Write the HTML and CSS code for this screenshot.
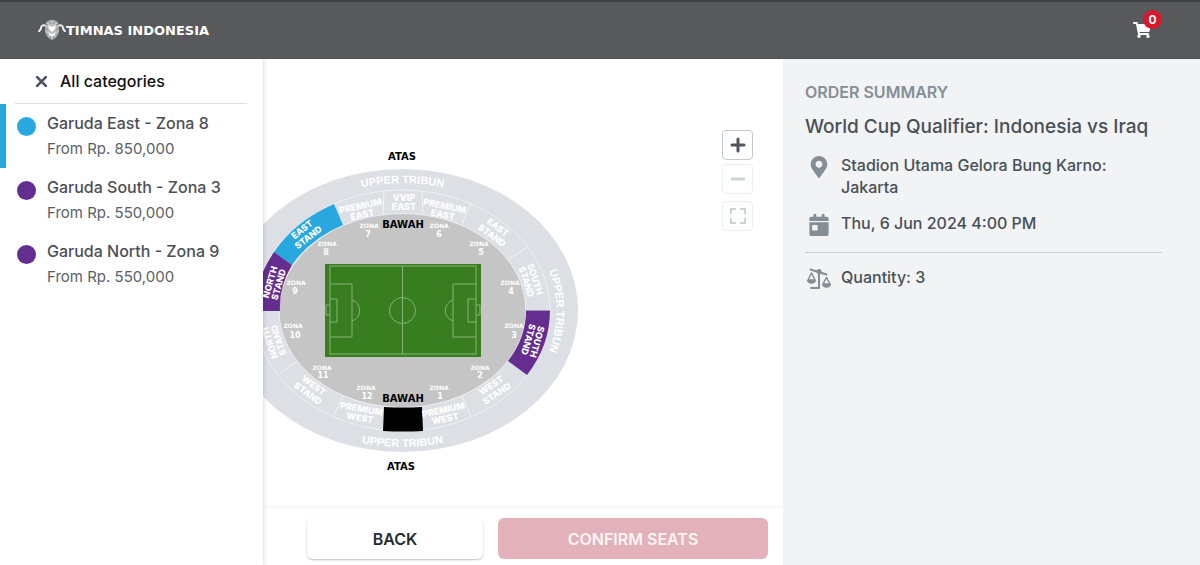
FILE: index.html
```html
<!DOCTYPE html>
<html lang="en">
<head>
<meta charset="utf-8">
<meta name="viewport" content="width=device-width, initial-scale=1">
<title>Timnas Indonesia – Select seats</title>
<link rel="stylesheet" href="styles.css">
</head>
<body>
<header class="topbar">
  <a class="brand" href="#">
    <svg class="brand-mark" viewBox="0 0 28 22" aria-hidden="true">
      <path d="M8 7C5 5 3 7 3 9c0 2-2 2-2 4M20 7c3-2 5 0 5 2 0 2 2 2 2 4" fill="none" stroke="#eee" stroke-width="2"/>
      <path d="M8 4c2-4 10-4 12 0l1 6c0 6-3 9-7 11-4-2-7-5-7-11z" fill="#bdbdbd"/>
      <path d="M8 5l5 4M20 5l-5 4M7 9l3 2M21 9l-3 2M9 16l3-2M19 16l-3-2M11 2l2 3M17 2l-2 3M12 19l2-3 2 3" stroke="#858788" fill="none"/>
      <path d="M10 6l4 2 4-2-1 4-3 3-3-3z" fill="#fff"/>
      <path d="M10 13l4 2 4-2-1 3-3 2-3-2z" fill="#f1f1f1"/>
    </svg>
    <span>TIMNAS INDONESIA</span>
  </a>
  <button class="cart" type="button" aria-label="Cart">
    <svg class="cart-icon" viewBox="0 0 576 512" aria-hidden="true"><path fill="#fff" d="M528.12 301.319l47.273-208C578.806 78.301 567.391 64 551.99 64H159.208l-9.166-44.81C147.758 8.021 137.93 0 126.529 0H24C10.745 0 0 10.745 0 24v16c0 13.255 10.745 24 24 24h69.883l70.248 343.435C147.325 417.1 136 435.222 136 456c0 30.928 25.072 56 56 56s56-25.072 56-56c0-15.674-6.447-29.835-16.824-40h209.647C430.447 426.165 424 440.326 424 456c0 30.928 25.072 56 56 56s56-25.072 56-56c0-22.172-12.888-41.332-31.579-50.405l5.517-24.276c3.413-15.018-8.002-29.319-23.403-29.319H218.117l-6.545-32h293.145c11.206 0 20.92-7.754 23.403-18.681z"/></svg>
    <span class="cart-count">0</span>
  </button>
</header>
<div class="layout">
  <nav class="categories" aria-label="Ticket categories">
    <button class="categories-head" type="button">
      <svg class="close-icon" viewBox="0 0 12 12" aria-hidden="true"><path d="M2 2l8 8M10 2l-8 8" stroke="#4b5360" stroke-width="2.500" stroke-linecap="round"/></svg>
      <span>All categories</span>
    </button>
    <ul class="category-list">
      <li><a class="category active" href="#"><span class="dot east"></span><span class="category-text"><strong>Garuda East - Zona 8</strong><span>From Rp. 850,000</span></span></a></li>
      <li><a class="category" href="#"><span class="dot"></span><span class="category-text"><strong>Garuda South - Zona 3</strong><span>From Rp. 550,000</span></span></a></li>
      <li><a class="category" href="#"><span class="dot"></span><span class="category-text"><strong>Garuda North - Zona 9</strong><span>From Rp. 550,000</span></span></a></li>
    </ul>
  </nav>
  <main class="stage">
    <div class="map">
      <svg class="stadium" viewBox="263 59 520 448" role="img" aria-label="Stadium map">
        <defs>
          <path id="arcTop" d="M242 310.500A160 127 0 0 1 563 310.500"/>
          <path id="arcBottom" d="M235 310.500A167 136 0 0 0 570 310.500"/>
          <path id="arcRight" d="M402.500 181A154 130 0 0 1 402.500 441"/>
        </defs>
        <ellipse cx="402.500" cy="310.500" rx="175.500" ry="141.500" fill="#dce0e5"/>
        <ellipse cx="402.500" cy="310.500" rx="147.500" ry="120.500" fill="none" stroke="#eef0f2"/>
        <ellipse cx="402.500" cy="310.500" rx="123.500" ry="97" fill="#c5c5c5" stroke="#eef0f2"/>
        <path d="M384 191l-1 23M422 191l1 23M471 203l-9 21M527 247l-18 12M280 373l16-11M333 417l10-21M471 417l-9-21M526 310.500h24" stroke="#f3f4f6"/>
        <path fill="#29a8e0" d="M274 252A147.500 120.500 0 0 1 334 204L343 225A123.500 97 0 0 0 292 265Z"/>
        <path fill="#662d91" d="M274 252A147.500 120.500 0 0 0 255 311H280A123.500 97 0 0 1 292 265Z"/>
        <path fill="#662d91" d="M526 310.500H550A147.500 120.500 0 0 1 527 375L508 361A123.500 97 0 0 0 526 310.500Z"/>
        <path d="M384 407q19 1 38 0l1 24q-20 1-40 0Z"/>
        <g fill="none" stroke="#87b276">
          <rect x="325" y="264" width="156" height="93" fill="#387d20" stroke="none"/>
          <rect x="330" y="266" width="146" height="88"/>
          <path d="M402.500 266v88M330 284h22v53h-22M330 299h7v23h-7M330 305h-4v10h4M476 284h-23v53h23M476 299h-8v23h8M476 305h4v10h-4M352 300a11 11 0 0 1 0 21M453 300a11 11 0 0 0 0 21"/>
          <circle cx="402.500" cy="310.500" r="13"/>
        </g>
        <g class="tribun">
          <text><textPath href="#arcTop" startOffset="50%">UPPER TRIBUN</textPath></text>
          <text><textPath href="#arcBottom" startOffset="50%">UPPER TRIBUN</textPath></text>
          <text><textPath href="#arcRight" startOffset="50%">UPPER TRIBUN</textPath></text>
        </g>
        <g class="gate">
          <text x="402" y="160">ATAS</text><text x="403" y="228">BAWAH</text>
          <text x="403" y="402">BAWAH</text><text x="401" y="470">ATAS</text>
        </g>
        <g class="stand">
          <text x="404" y="201">VVIP<tspan x="404" dy="9">EAST</tspan></text>
          <text transform="translate(361 209) rotate(-12)">PREMIUM<tspan x="0" dy="9">EAST</tspan></text>
          <text transform="translate(444 209) rotate(12)">PREMIUM<tspan x="0" dy="9">EAST</tspan></text>
          <text transform="translate(361 412) rotate(10)">PREMIUM<tspan x="0" dy="9">WEST</tspan></text>
          <text transform="translate(444 413) rotate(-12)">PREMIUM<tspan x="0" dy="9">WEST</tspan></text>
          <text transform="translate(304 232) rotate(-38)">EAST<tspan x="0" dy="10">STAND</tspan></text>
          <text transform="translate(496 230) rotate(36)">EAST<tspan x="0" dy="10">STAND</tspan></text>
          <text transform="translate(312 388) rotate(36)">WEST<tspan x="0" dy="10">STAND</tspan></text>
          <text transform="translate(493 388) rotate(-34)">WEST<tspan x="0" dy="10">STAND</tspan></text>
          <text transform="translate(273 283) rotate(-74)">NORTH<tspan x="0" dy="9">STAND</tspan></text>
          <text transform="translate(273 342) rotate(-108)">NORTH<tspan x="0" dy="9">STAND</tspan></text>
          <text transform="translate(532 280) rotate(72)">SOUTH<tspan x="0" dy="9">STAND</tspan></text>
          <text transform="translate(534 341) rotate(106)">SOUTH<tspan x="0" dy="9">STAND</tspan></text>
        </g>
        <g class="zone">
          <text x="369" y="228">ZONA<tspan class="number" x="368" dy="9">7</tspan></text>
          <text x="439" y="228">ZONA<tspan class="number" x="439" dy="9">6</tspan></text>
          <text x="327" y="246">ZONA<tspan class="number" x="326" dy="9">8</tspan></text>
          <text x="479" y="246">ZONA<tspan class="number" x="481" dy="9">5</tspan></text>
          <text x="296" y="285">ZONA<tspan class="number" x="295" dy="9">9</tspan></text>
          <text x="510" y="285">ZONA<tspan class="number" x="511" dy="9">4</tspan></text>
          <text x="293" y="328">ZONA<tspan class="number" x="295" dy="10">10</tspan></text>
          <text x="514" y="328">ZONA<tspan class="number" x="514" dy="10">3</tspan></text>
          <text x="322" y="370">ZONA<tspan class="number" x="323" dy="8">11</tspan></text>
          <text x="480" y="370">ZONA<tspan class="number" x="480" dy="8">2</tspan></text>
          <text x="366" y="390">ZONA<tspan class="number" x="367" dy="9">12</tspan></text>
          <text x="439" y="390">ZONA<tspan class="number" x="440" dy="9">1</tspan></text>
        </g>
      </svg>
      <div class="zoom-controls">
        <button type="button" class="zoom-button" aria-label="Zoom in"><svg viewBox="0 0 16 16"><path d="M8 2v12M2 8h12" stroke="#50565b" stroke-width="3" stroke-linecap="round"/></svg></button>
        <button type="button" class="zoom-button faded" aria-label="Zoom out"><svg viewBox="0 0 16 16"><path d="M1 8h14" stroke="#d0d3d6" stroke-width="3"/></svg></button>
        <button type="button" class="zoom-button faded fit" aria-label="Fit to screen"><svg viewBox="0 0 16 16"><path d="M1 6V1h5M10 1h5v5M15 10v5h-5M6 15H1v-5" fill="none" stroke="#cfd2d5" stroke-width="2"/></svg></button>
      </div>
    </div>
    <footer class="actions">
      <button class="button back" type="button">BACK</button>
      <button class="button confirm" type="button">CONFIRM SEATS</button>
    </footer>
  </main>
  <aside class="summary">
    <h2>ORDER SUMMARY</h2>
    <h1>World Cup Qualifier: Indonesia vs Iraq</h1>
    <div class="detail">
      <svg class="detail-icon" viewBox="0 0 384 512" aria-hidden="true"><path d="M172.268 501.670C26.970 291.031 0 269.413 0 192 0 85.961 85.961 0 192 0s192 85.961 192 192c0 77.413-26.970 99.031-172.268 309.670-9.535 13.774-29.930 13.773-39.464 0zM192 272c44.183 0 80-35.817 80-80s-35.817-80-80-80-80 35.817-80 80 35.817 80 80 80z"/></svg>
      <p>Stadion Utama Gelora Bung Karno: Jakarta</p>
    </div>
    <div class="detail">
      <svg class="detail-icon" viewBox="0 0 448 512" aria-hidden="true"><path d="M0 464c0 26.500 21.500 48 48 48h352c26.500 0 48-21.500 48-48V192H0v272zm64-192c0-8.800 7.200-16 16-16h96c8.800 0 16 7.200 16 16v96c0 8.800-7.200 16-16 16H80c-8.800 0-16-7.200-16-16v-96zM400 64h-48V16c0-8.800-7.200-16-16-16h-32c-8.800 0-16 7.200-16 16v48H160V16c0-8.800-7.200-16-16-16h-32c-8.800 0-16 7.200-16 16v48H48C21.500 64 0 85.500 0 112v48h448v-48c0-26.500-21.500-48-48-48z"/></svg>
      <p>Thu, 6 Jun 2024 4:00 PM</p>
    </div>
    <div class="detail quantity">
      <svg class="detail-icon" viewBox="0 0 26 22" aria-hidden="true">
        <path d="M4.500 1.500l16 5M13 4v16H5" fill="none" stroke="#858d95" stroke-width="2" stroke-linecap="round" stroke-linejoin="round"/>
        <circle cx="13" cy="3.500" r="2.500"/>
        <path d="M5.500 5L2 12h7zM20.500 9.500L17 16h7z" fill="none" stroke="#858d95" stroke-width="1.500" stroke-linejoin="round"/>
        <path d="M1 12h9c0 5-9 5-9 0zM16 16h9c0 5-9 5-9 0z"/>
      </svg>
      <p>Quantity: 3</p>
    </div>
  </aside>
</div>
</body>
</html>
```
FILE: styles.css
```css
* { box-sizing: border-box; }

body {
  margin: 0;
  min-height: 100vh;
  display: flex;
  flex-direction: column;
  background: #fff;
  color: #495057;
  font-family: Inter, "Liberation Sans", sans-serif;
  font-size: 16px;
}

button { font: inherit; cursor: pointer; }

.topbar {
  display: flex;
  align-items: center;
  justify-content: space-between;
  height: 59px;
  padding: 0 38px;
  border-top: 2px solid #414141;
  border-bottom: 1px solid #4e4f50;
  background: #58595a;
}

.brand {
  display: flex;
  align-items: center;
  color: #fff;
  font: bold 13px "DejaVu Sans", sans-serif;
  text-decoration: none;
}

.brand-mark { width: 28px; height: 22px; }

.cart {
  position: relative;
  padding: 0;
  width: 29px;
  height: 16px;
  border: 0;
  background: none;
}

.cart-icon { display: block; width: 18px; height: 16px; }

.cart-count {
  position: absolute;
  top: -12px;
  right: 0;
  width: 19px;
  border-radius: 50%;
  background: #d9182d;
  color: #fff;
  font-size: 12px;
  font-weight: 700;
  line-height: 19px;
  text-align: center;
}

.layout {
  flex: 1;
  display: grid;
  grid-template-columns: 263px minmax(0, 1fr) 417px;
}

.categories {
  z-index: 1;
  background: #fff;
  box-shadow: 0 0 5px rgba(0, 0, 0, 0.2);
  clip-path: inset(0 -8px 0 0);
}

.categories-head {
  display: flex;
  align-items: center;
  gap: 12px;
  width: calc(100% - 31px);
  height: 45px;
  margin: 0 16px 0 15px;
  padding: 0 20px;
  border: 0;
  border-bottom: 1px solid #dedfe1;
  background: none;
  color: #111;
  font-weight: 500;
}

.close-icon { width: 13px; height: 13px; }

.category-list { margin: 0; padding: 0; list-style: none; }

.category {
  display: flex;
  gap: 11px;
  min-height: 64px;
  padding: 9px 12px 9px 11px;
  border-left: 6px solid transparent;
  color: #5b6067;
  font-size: 15px;
  text-decoration: none;
}

.category.active { border-color: #29a8e0; }

.dot {
  flex: none;
  width: 19px;
  height: 19px;
  margin-top: 4px;
  border-radius: 50%;
  background: #662d91;
}

.dot.east { background: #29a8e0; }

.category-text {
  display: flex;
  flex-direction: column;
  gap: 6px;
  line-height: 20px;
}

.category-text strong { color: #4b5056; font-size: 16px; font-weight: 500; }

.stage { display: flex; flex-direction: column; }

.map { position: relative; flex: 1; }

.stadium { display: block; width: 100%; height: 100%; }

.stadium text { text-anchor: middle; }

.tribun text { fill: #fff; font: bold 11px "Liberation Sans", sans-serif; }

.gate text { fill: #000; font: bold 10px "DejaVu Sans", sans-serif; }

.stand text { fill: #fff; font-size: 9px; font-weight: 800; }

.zone text { fill: #fff; font: bold 6px "DejaVu Sans", sans-serif; }

.zone .number { font-size: 8px; }

.zoom-controls {
  position: absolute;
  top: 71px;
  right: 30px;
  display: flex;
  flex-direction: column;
  gap: 4px;
}

.zoom-button {
  display: grid;
  place-items: center;
  width: 31px;
  height: 30px;
  padding: 0;
  border: 1px solid #c5c8ca;
  border-radius: 4px;
  background: #fff;
}

.zoom-button svg { width: 16px; height: 16px; }

.zoom-button.faded { border-color: #eceded; }

.zoom-button.fit { margin-top: 3px; }

.actions {
  display: flex;
  justify-content: flex-end;
  gap: 15px;
  padding: 10px 15px 7px;
  border-top: 1px solid #f5f5f5;
  box-shadow: 0 -1px 3px rgba(0, 0, 0, 0.04);
}

.button {
  height: 41px;
  border: 0;
  border-radius: 6px;
  font-size: 16px;
  font-weight: 600;
}

.back {
  width: 176px;
  background: #fff;
  box-shadow: 0 1px 2px rgba(0, 0, 0, 0.25);
  color: #262b2f;
}

.confirm { width: 270px; background: #e3b1b9; color: #fdf5f6; }

.summary {
  padding: 22px 38px 20px 22px;
  background: #f1f3f5;
}

.summary h2 {
  margin: 0 0 12px;
  color: #868e96;
  font-size: 16px;
  font-weight: 600;
  line-height: 22px;
}

.summary h1 {
  margin: 0 0 15px;
  font-size: 19px;
  font-weight: 500;
  line-height: 24px;
}

.detail {
  display: flex;
  gap: 8px;
  margin-bottom: 14px;
  font-weight: 500;
}

.detail p { margin: 0; max-width: 300px; line-height: 22px; }

.detail-icon {
  flex: none;
  width: 28px;
  height: 22px;
  margin-top: 2px;
  fill: #858d95;
}

.quantity {
  margin-top: 16px;
  padding-top: 13px;
  border-top: 1px solid #c9ccce;
}
```
